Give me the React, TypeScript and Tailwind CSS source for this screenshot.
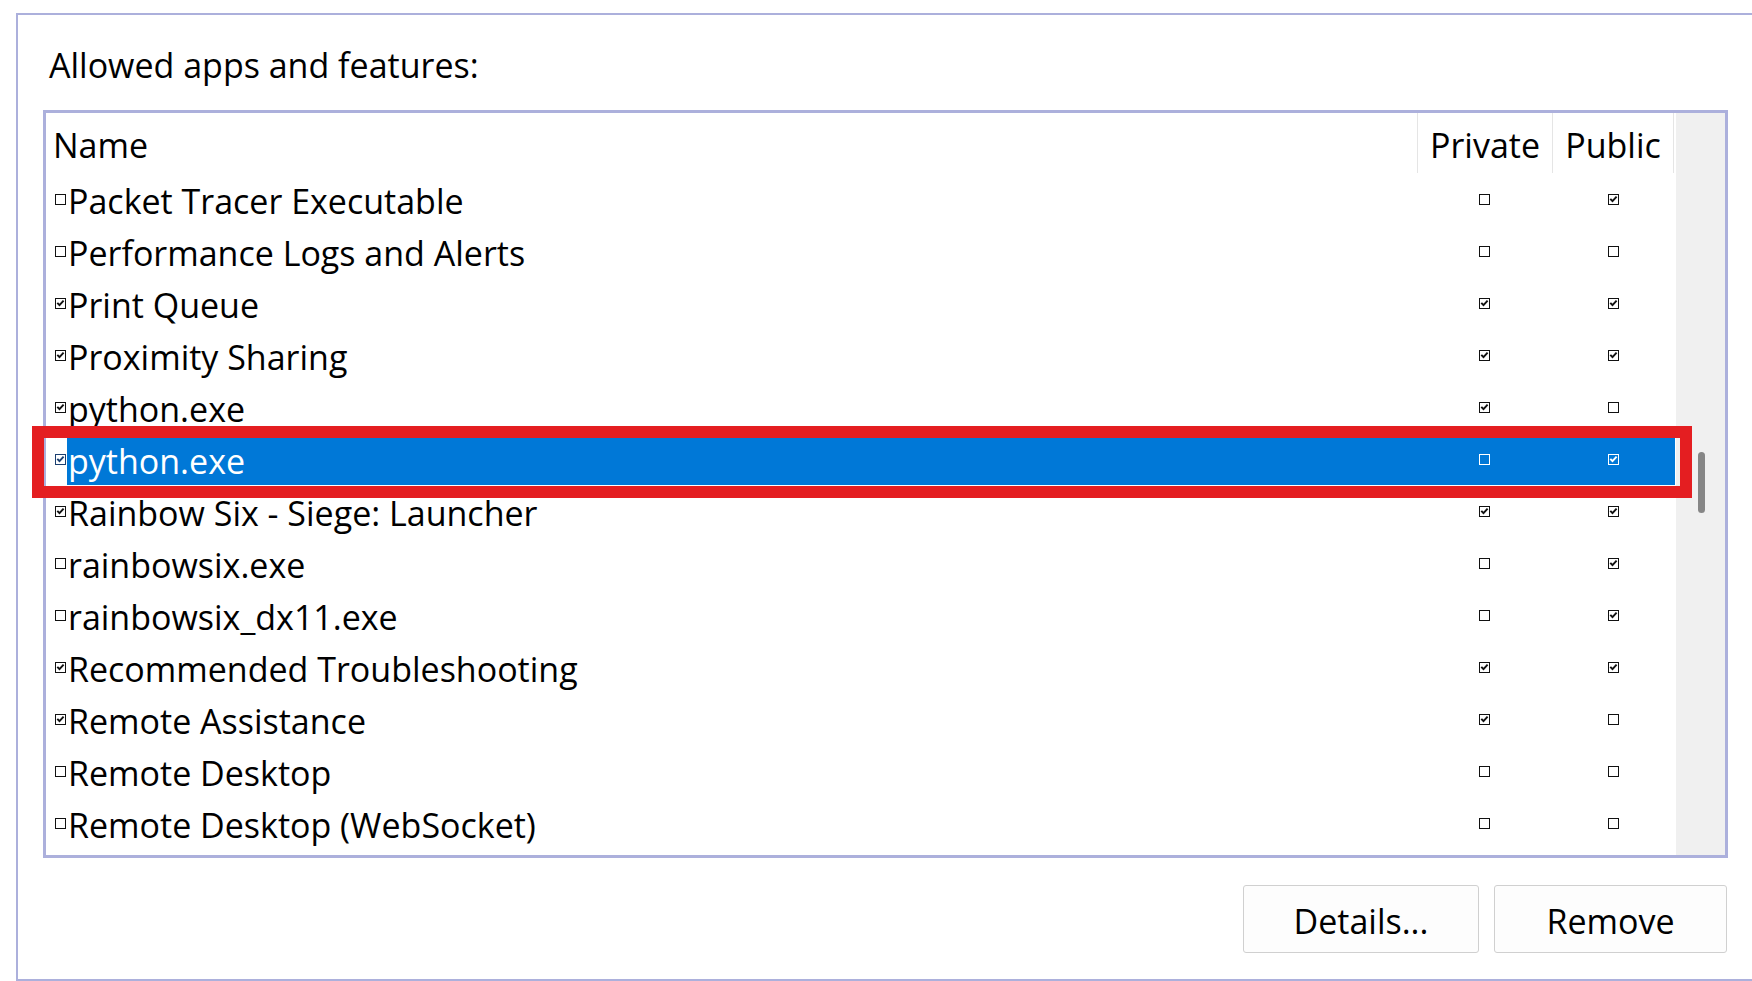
import React from "react";

type AppRow = {
  name: string;
  enabled: boolean;
  priv: boolean;
  pub: boolean;
  selected?: boolean;
};

const ROWS: AppRow[] = [
  { name: "Packet Tracer Executable", enabled: false, priv: false, pub: true },
  { name: "Performance Logs and Alerts", enabled: false, priv: false, pub: false },
  { name: "Print Queue", enabled: true, priv: true, pub: true },
  { name: "Proximity Sharing", enabled: true, priv: true, pub: true },
  { name: "python.exe", enabled: true, priv: true, pub: false },
  { name: "python.exe", enabled: true, priv: false, pub: true, selected: true },
  { name: "Rainbow Six - Siege: Launcher", enabled: true, priv: true, pub: true },
  { name: "rainbowsix.exe", enabled: false, priv: false, pub: true },
  { name: "rainbowsix_dx11.exe", enabled: false, priv: false, pub: true },
  { name: "Recommended Troubleshooting", enabled: true, priv: true, pub: true },
  { name: "Remote Assistance", enabled: true, priv: true, pub: false },
  { name: "Remote Desktop", enabled: false, priv: false, pub: false },
  { name: "Remote Desktop (WebSocket)", enabled: false, priv: false, pub: false },
];

function Box({ checked, color = "#111" }: { checked: boolean; color?: string }) {
  return (
    <svg width="11" height="11" viewBox="0 0 11 11" className="block">
      <rect x="0.5" y="0.5" width="10" height="10" fill="none" stroke={color} strokeWidth="1" />
      {checked && (
        <path d="M2.3 4.8 L4.5 7.2 L8.6 2.6" fill="none" stroke={color} strokeWidth="1.9" />
      )}
    </svg>
  );
}

export default function App() {
  return (
    <div
      className="w-[1752px] h-[981px] bg-white overflow-hidden relative pt-[13px] pl-[16px] text-black"
      style={{ fontFamily: '"Open Sans", "Noto Sans", sans-serif' }}
    >
      <div className="h-[968px] border-l-2 border-t-2 border-b-2 border-[#acb0dc] flex flex-col">

        {/* Heading */}
        <div className="h-[95px] pt-[30px] pl-[31px] text-[34px] leading-[40px] whitespace-nowrap">
          Allowed apps and features:
        </div>

        {/* List */}
        <div className="ml-[25px] w-[1685px] h-[748px] border-[3px] border-[#acb0dc] flex">
          <div className="w-[1630px] flex flex-col">
            <div className="h-[60px] flex items-center text-[34px]">
              <div className="w-[1371px] pl-[7px] pt-[4px]">Name</div>
              <div className="w-[135px] h-full pt-[4px] border-l border-[#e5e5e5] flex items-center justify-center">Private</div>
              <div className="w-[122px] h-full pt-[4px] border-l border-r border-[#e5e5e5] flex items-center justify-center">Public</div>
            </div>

            {ROWS.map((r, i) => (
              <div key={i} className="h-[52px] flex text-[34px]">
                <div className="w-[21px] pl-[9px] flex items-center">
                  <Box checked={r.enabled} color={r.selected ? "#1b3f70" : "#111"} />
                </div>
                <div className={`flex-1 flex items-center ${r.selected ? "bg-[#0078d7] text-white" : ""}`}>
                  <div className="w-[1350px] pl-[1px] pt-[4px] leading-[40px] whitespace-nowrap">{r.name}</div>
                  <div className="w-[135px] flex justify-center">
                    <Box checked={r.priv} color={r.selected ? "#fff" : "#111"} />
                  </div>
                  <div className="w-[122px] flex justify-center">
                    <Box checked={r.pub} color={r.selected ? "#fff" : "#111"} />
                  </div>
                </div>
              </div>
            ))}
          </div>

          {/* Scrollbar */}
          <div className="w-[49px] bg-[#f0f0f0] ml-[1px]">
            <div className="mt-[339px] ml-[22px] w-[7px] h-[61px] rounded-full bg-[#868686]" />
          </div>
        </div>

        {/* Buttons */}
        <div className="flex justify-end gap-[15px] pr-[25px] mt-[27px] text-[34px]">
          <button className="w-[236px] h-[68px] pt-[5px] rounded-[3px] border border-[#d0d0d0] bg-[#fdfdfd]">Details...</button>
          <button className="w-[233px] h-[68px] pt-[5px] rounded-[3px] border border-[#d0d0d0] bg-[#fdfdfd]">Remove</button>
        </div>
      </div>

      {/* Red highlight annotation */}
      <div className="absolute left-[32px] top-[426px] w-[1660px] h-[72px] border-[12px] border-[#e41e21]" />
    </div>
  );
}
